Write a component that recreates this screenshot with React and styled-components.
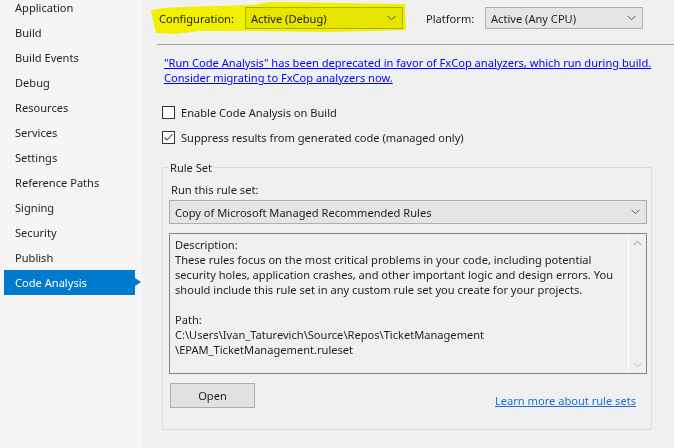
import React from "react";
import styled, { createGlobalStyle } from "styled-components";

const GlobalStyle = createGlobalStyle`
  html, body {
    margin: 0;
    padding: 0;
    background: #f0f0f0;
  }
  body {
    font-family: "Segoe UI", "Noto Sans", "Open Sans", sans-serif;
    font-size: 11.1px;
    color: #1e1e1e;
  }
`;

const Page = styled.div`
  position: relative;
  display: flex;
  width: 674px;
  height: 448px;
  overflow: hidden;
`;

const Sidebar = styled.nav`
  width: 142px;
  flex-shrink: 0;
  background: #f5f5f5;
`;

const NavList = styled.ul`
  list-style: none;
  margin: -5px 0 0;
  padding: 0;
`;

const NavItem = styled.li`
  position: relative;
  height: 25px;
  line-height: 25px;
  margin-left: 4px;
  margin-right: 7px;
  padding-left: 11px;
  white-space: nowrap;
  background: ${({ $active }) => ($active ? "#007acc" : "transparent")};
  color: ${({ $active }) => ($active ? "#ffffff" : "#1e1e1e")};

  ${({ $active }) =>
    $active &&
    `
    &::after {
      content: "";
      position: absolute;
      right: -6px;
      top: 8px;
      border-left: 6px solid #007acc;
      border-top: 4.5px solid transparent;
      border-bottom: 4.5px solid transparent;
    }
  `}
`;

const Main = styled.main`
  flex: 1;
  min-width: 0;
  overflow: hidden;
  padding-left: 14px;
  background: #f0f0f0;
`;

const TopRow = styled.div`
  display: flex;
  align-items: center;
  height: 36px;
  padding-left: 3px;
  box-sizing: border-box;
`;

const Label = styled.span`
  width: ${({ $w }) => $w}px;
  flex-shrink: 0;
  white-space: nowrap;
`;

const Select = styled.div`
  display: flex;
  align-items: center;
  justify-content: space-between;
  flex-shrink: 0;
  width: ${({ $w }) => ($w ? `${$w}px` : "auto")};
  height: ${({ $h }) => $h || 22}px;
  box-sizing: border-box;
  padding: 0 6px 0 5px;
  border: 1px solid #adadad;
  background: #e5e5e5;
  white-space: nowrap;
`;

const Gap = styled.span`
  width: ${({ $w }) => $w}px;
  flex-shrink: 0;
`;

const Separator = styled.hr`
  margin: 8px 0 0 1px;
  border: 0;
  border-top: 1px solid #a0a0a0;
`;

const Notice = styled.a`
  display: block;
  margin: 10px 0 0 8px;
  line-height: 15px;
  color: #0000ff;
  text-decoration: underline;
  white-space: nowrap;
`;

const CheckRow = styled.label`
  display: flex;
  align-items: center;
  gap: 6px;
  height: 25px;
  margin-left: 6px;
  white-space: nowrap;
`;

const Box = styled.span`
  display: flex;
  align-items: center;
  justify-content: center;
  width: 13px;
  height: 13px;
  box-sizing: border-box;
  border: 1px solid #333333;
  background: #ffffff;
`;

const Checks = styled.div`
  margin-top: 15px;
`;

const Group = styled.fieldset`
  margin: 10px 22px 0 6px;
  padding: 6px 4px 21px 6px;
  border: 1px solid #dcdcdc;
  border-radius: 0;
  min-width: 0;
`;

const Legend = styled.legend`
  padding: 0 1px;
  margin-left: 0;
  line-height: 15px;
`;

const SmallLabel = styled.div`
  margin-left: 2px;
  height: 18px;
  line-height: 18px;
  margin-bottom: 1px;
`;

const DescBox = styled.div`
  display: flex;
  margin-top: 9px;
  height: 141px;
  box-sizing: border-box;
  border: 1px solid #828282;
  background: #f0f0f0;
`;

const DescText = styled.div`
  flex: 1;
  padding: 3px 0 0 5px;
  line-height: 15px;
  white-space: nowrap;
`;

const ScrollBar = styled.div`
  width: 17px;
  border-left: 1px solid #ffffff;
  display: flex;
  flex-direction: column;
  justify-content: space-between;
  align-items: center;
  padding: 6px 0 5px;
`;

const Footer = styled.div`
  display: flex;
  align-items: flex-end;
  justify-content: space-between;
  margin-top: 9px;
  padding-right: 11px;
`;

const Button = styled.button`
  width: 85px;
  height: 25px;
  margin-left: 1px;
  border: 1px solid #adadad;
  background: #e1e1e1;
  font: inherit;
  color: #1e1e1e;
`;

const HelpLink = styled.a`
  color: #1a6fd6;
  text-decoration: underline;
  margin-bottom: 0;
`;

const Highlight = styled.svg`
  position: absolute;
  left: 0;
  top: 0;
  mix-blend-mode: multiply;
  pointer-events: none;
`;

const Chevron = ({ color = "#555" }) => (
  <svg width="9" height="6" viewBox="0 0 9 6">
    <polyline points="0.5,0.8 4.5,4.8 8.5,0.8" fill="none" stroke={color} strokeWidth="1" />
  </svg>
);

const pages = [
  "Application",
  "Build",
  "Build Events",
  "Debug",
  "Resources",
  "Services",
  "Settings",
  "Reference Paths",
  "Signing",
  "Security",
  "Publish",
  "Code Analysis",
];

export default function App() {
  return (
    <>
      <GlobalStyle />
      <Page>
        <Sidebar>
          <NavList>
            {pages.map((p) => (
              <NavItem key={p} $active={p === "Code Analysis"}>
                {p}
              </NavItem>
            ))}
          </NavList>
        </Sidebar>
        <Main>
          <TopRow>
            <Label $w={86}>Configuration:</Label>
            <Select $w={158}>
              Active (Debug)
              <Chevron />
            </Select>
            <Gap $w={23} />
            <Label $w={59}>Platform:</Label>
            <Select $w={158}>
              Active (Any CPU)
              <Chevron />
            </Select>
          </TopRow>
          <Separator />
          <Notice>
            "Run Code Analysis" has been deprecated in favor of FxCop analyzers, which run during build.
            <br />
            Consider migrating to FxCop analyzers now.
          </Notice>
          <Checks>
            <CheckRow>
              <Box />
              Enable Code Analysis on Build
            </CheckRow>
            <CheckRow>
              <Box>
                <svg width="11" height="11" viewBox="0 0 11 11">
                  <polyline points="1.5,5.5 4,8 9.5,2" fill="none" stroke="#444" strokeWidth="1.1" />
                </svg>
              </Box>
              Suppress results from generated code (managed only)
            </CheckRow>
          </Checks>
          <Group>
            <Legend>Rule Set</Legend>
            <SmallLabel>Run this rule set:</SmallLabel>
            <Select $h={24}>
              Copy of Microsoft Managed Recommended Rules
              <Chevron />
            </Select>
            <DescBox>
              <DescText>
                Description:
                <br />
                These rules focus on the most critical problems in your code, including potential
                <br />
                security holes, application crashes, and other important logic and design errors. You
                <br />
                should include this rule set in any custom rule set you create for your projects.
                <br />
                <br />
                Path:
                <br />
                C:\Users\Ivan_Taturevich\Source\Repos\TicketManagement
                <br />
                \EPAM_TicketManagement.ruleset
              </DescText>
              <ScrollBar>
                <svg width="9" height="6" viewBox="0 0 9 6">
                  <polyline points="0.5,5.2 4.5,1.2 8.5,5.2" fill="none" stroke="#c2c2c2" strokeWidth="1.4" />
                </svg>
                <Chevron color="#c2c2c2" />
              </ScrollBar>
            </DescBox>
            <Footer>
              <Button>Open</Button>
              <HelpLink>Learn more about rule sets</HelpLink>
            </Footer>
          </Group>
        </Main>
        <Highlight width="674" height="448" viewBox="0 0 674 448">
          <path
            d="M151,11 C160,7 180,7 215,6 L252,5 L272,2 L405,4 L406,30 L370,31 L330,32 L250,31 L200,31 L175,34 L156,33 Z"
            fill="#ffff00"
          />
        </Highlight>
      </Page>
    </>
  );
}
